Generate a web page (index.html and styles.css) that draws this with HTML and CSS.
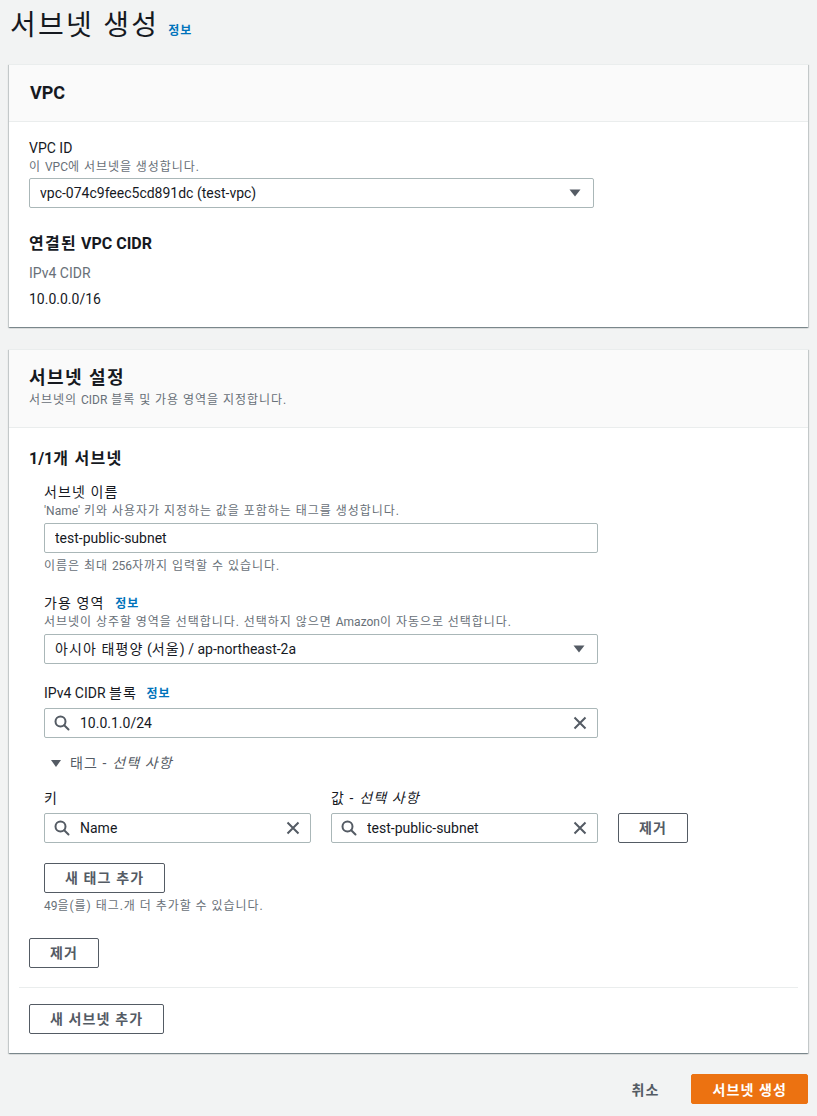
FILE: index.html
```html
<!DOCTYPE html>
<html lang="ko">
<head>
<meta charset="utf-8">
<title>서브넷 생성</title>
<link rel="stylesheet" href="styles.css">
</head>
<body>
<div class="page">
  <div class="page-head">
    <h1 class="page-title ko">서브넷 생성</h1>
    <a class="info ko" href="#">정보</a>
  </div>

  <section class="card card-vpc">
    <div class="card-head">
      <h2 class="card-title">VPC</h2>
    </div>
    <div class="card-body card-body-vpc">
      <div class="label">VPC ID</div>
      <div class="desc ko">이 <span class="en">VPC</span>에 서브넷을 생성합니다.</div>
      <div class="select select-vpc">
        <span>vpc-074c9feec5cd891dc (test-vpc)</span>
        <svg class="caret" width="12" height="8" viewBox="0 0 12 8"><path d="M0.5 0.5h11L6 7.5z" fill="#545b64"/></svg>
      </div>
      <h3 class="sub-title ko">연결된<span class="en"> VPC CIDR</span></h3>
      <div class="kv-key">IPv4 CIDR</div>
      <div class="kv-val">10.0.0.0/16</div>
    </div>
  </section>

  <section class="card">
    <div class="card-head card-head-desc">
      <h2 class="card-title ko">서브넷 설정</h2>
      <div class="desc head-desc ko">서브넷의 <span class="en">CIDR</span> 블록 및 가용 영역을 지정합니다.</div>
    </div>
    <div class="card-body card-body-subnet">
      <h3 class="sub-title first ko"><span class="en">1/1</span>개 서브넷</h3>
      <div class="group">
        <div class="field">
          <div class="label ko">서브넷 이름</div>
          <div class="desc ko"><span class="en">'Name'</span> 키와 사용자가 지정하는 값을 포함하는 태그를 생성합니다.</div>
          <div class="input"><span class="grow">test-public-subnet</span></div>
          <div class="hint ko">이름은 최대 <span class="en">256</span>자까지 입력할 수 있습니다.</div>
        </div>
        <div class="field">
          <div class="label ko">가용 영역 <a class="info" href="#">정보</a></div>
          <div class="desc ko">서브넷이 상주할 영역을 선택합니다. 선택하지 않으면 <span class="en">Amazon</span>이 자동으로 선택합니다.</div>
          <div class="select">
            <span><span class="ko">아시아 태평양</span> (<span class="ko">서울</span>) / ap-northeast-2a</span>
            <svg class="caret" width="12" height="8" viewBox="0 0 12 8"><path d="M0.5 0.5h11L6 7.5z" fill="#545b64"/></svg>
          </div>
        </div>
        <div class="field">
          <div class="label label-gap">IPv4 CIDR <span class="ko">블록</span> <a class="info ko" href="#">정보</a></div>
          <div class="input search">
            <svg class="ico-search" width="16" height="16" viewBox="0 0 16 16"><circle cx="6.5" cy="6.5" r="5" fill="none" stroke="#545b64" stroke-width="2"/><path d="M10.2 10.2L14.5 14.5" stroke="#545b64" stroke-width="2" stroke-linecap="round"/></svg>
            <span class="grow">10.0.1.0/24</span>
            <svg class="ico-x" width="14" height="14" viewBox="0 0 14 14"><path d="M1.5 1.5l11 11M12.5 1.5l-11 11" stroke="#545b64" stroke-width="2"/></svg>
          </div>
        </div>
        <div class="expander">
          <svg class="tri" width="10" height="7" viewBox="0 0 10 7"><path d="M0 0h10L5 7z" fill="#545b64"/></svg>
          <span class="ko">태그 - <i>선택 사항</i></span>
        </div>
        <div class="tags">
          <div class="label tag-label ko">키</div>
          <div class="label tag-label ko">값 - <i>선택 사항</i></div>
          <div></div>
          <div class="input search">
            <svg class="ico-search" width="16" height="16" viewBox="0 0 16 16"><circle cx="6.5" cy="6.5" r="5" fill="none" stroke="#545b64" stroke-width="2"/><path d="M10.2 10.2L14.5 14.5" stroke="#545b64" stroke-width="2" stroke-linecap="round"/></svg>
            <span class="grow">Name</span>
            <svg class="ico-x" width="14" height="14" viewBox="0 0 14 14"><path d="M1.5 1.5l11 11M12.5 1.5l-11 11" stroke="#545b64" stroke-width="2"/></svg>
          </div>
          <div class="input search">
            <svg class="ico-search" width="16" height="16" viewBox="0 0 16 16"><circle cx="6.5" cy="6.5" r="5" fill="none" stroke="#545b64" stroke-width="2"/><path d="M10.2 10.2L14.5 14.5" stroke="#545b64" stroke-width="2" stroke-linecap="round"/></svg>
            <span class="grow">test-public-subnet</span>
            <svg class="ico-x" width="14" height="14" viewBox="0 0 14 14"><path d="M1.5 1.5l11 11M12.5 1.5l-11 11" stroke="#545b64" stroke-width="2"/></svg>
          </div>
          <button class="btn ko">제거</button>
        </div>
        <button class="btn btn-addtag ko">새 태그 추가</button>
        <div class="hint ko"><span class="en">49</span>을(를) 태그.개 더 추가할 수 있습니다.</div>
      </div>
      <button class="btn btn-remove ko">제거</button>
      <hr class="divider">
      <button class="btn ko">새 서브넷 추가</button>
    </div>
  </section>

  <div class="footer">
    <button class="btn-link ko">취소</button>
    <button class="btn-primary ko">서브넷 생성</button>
  </div>
</div>
</body>
</html>
```

FILE: styles.css
```css
* { box-sizing: border-box; }

html, body {
  margin: 0;
  padding: 0;
  background: #f2f3f3;
}

body {
  font-family: Roboto, "Noto Sans CJK KR", sans-serif;
  font-size: 14px;
  line-height: 20px;
  color: #16191f;
}

/* Hangul runs are set a little wider, as in the reference */
.ko { letter-spacing: 0.08em; }
.en { letter-spacing: 0; }

.page {
  padding: 8px 9px 0 9px;
}

.page-head {
  display: flex;
  align-items: baseline;
  gap: 9px;
  margin-bottom: 20px;
  padding-left: 1px;
}

.page-title {
  margin: 0;
  font-size: 28px;
  line-height: 36px;
  font-weight: 400;
  color: #16191f;
}

.info {
  font-size: 12px;
  line-height: 16px;
  font-weight: 700;
  color: #0073bb;
  text-decoration: none;
}

.label .info {
  margin-left: 6px;
}

.card {
  background: #fff;
  border-top: 1px solid #eaeded;
  box-shadow: 0 1px 1px 0 rgba(0, 28, 36, 0.3), 1px 1px 1px 0 rgba(0, 28, 36, 0.15), -1px 1px 1px 0 rgba(0, 28, 36, 0.15);
  margin-bottom: 21px;
}

.card-vpc {
  margin-bottom: 22px;
}

.card-head {
  background: #fafafa;
  border-bottom: 1px solid #eaeded;
  padding: 17px 20px 17px 21px;
}

.card-head-desc {
  padding: 17px 20px 19px 20px;
}

.card-title {
  margin: 0;
  font-size: 18px;
  line-height: 22px;
  font-weight: 700;
}

.card-body {
  padding: 16px 20px 17px 20px;
}

.card-body-subnet {
  padding: 20px 10px 19px 10px;
}

.card-body-subnet > .sub-title,
.card-body-subnet > .btn,
.card-body-subnet > .group {
  margin-left: 10px;
}

.label {
  font-size: 14px;
  line-height: 20px;
}

.desc {
  font-size: 12px;
  line-height: 16px;
  color: #687078;
  margin-top: 1px;
}

.head-desc.desc {
  margin-top: 3px;
}

.hint {
  font-size: 12px;
  line-height: 16px;
  color: #687078;
  margin-top: 5px;
}

.select,
.input {
  display: flex;
  align-items: center;
  height: 30px;
  border: 1px solid #aab7b8;
  border-radius: 2px;
  background: #fff;
  padding: 0 12px 0 10px;
  font-size: 14px;
  margin-top: 4px;
}

.select > span,
.input .grow {
  flex: 1;
  white-space: nowrap;
  overflow: hidden;
}

.select-vpc {
  width: 565px;
  margin-top: 3px;
}

.caret {
  flex: none;
}

.sub-title {
  margin: 25px 0 0 0;
  font-size: 16px;
  line-height: 22px;
  font-weight: 700;
}

.sub-title.first {
  margin-top: 0;
}

.kv-key {
  margin-top: 7px;
  line-height: 22px;
  color: #687078;
}

.kv-val {
  margin-top: 4px;
  line-height: 22px;
}

.group {
  width: 554px;
  padding-left: 15px;
  box-sizing: content-box;
  margin-top: 12px;
}

.field + .field {
  margin-top: 19px;
}

.label-gap + .input {
  margin-top: 5px;
}

.input.search {
  padding: 0 10px 0 9px;
}

.ico-search {
  flex: none;
  margin-right: 10px;
}

.ico-x {
  flex: none;
}

.expander {
  display: flex;
  align-items: center;
  gap: 9px;
  margin-top: 15px;
  padding-left: 7px;
  color: #545b64;
  line-height: 20px;
}

.expander i,
.tag-label i {
  font-style: italic;
}

.tags {
  display: grid;
  grid-template-columns: 267px 267px 70px;
  column-gap: 20px;
  margin-top: 15px;
  width: 644px;
}

.tags .input {
  margin-top: 5px;
}

.tags .btn {
  margin-top: 5px;
}

.btn {
  display: inline-block;
  height: 30px;
  padding: 0 20px;
  border: 1px solid #545b64;
  border-radius: 2px;
  background: #fff;
  color: #545b64;
  font-family: inherit;
  font-size: 14px;
  font-weight: 700;
  line-height: 28px;
  white-space: nowrap;
  cursor: pointer;
}

.btn-addtag {
  margin-top: 20px;
  display: block;
}

.btn-remove {
  display: block;
  margin-top: 24px;
}

.divider {
  border: 0;
  border-top: 1px solid #eaeded;
  margin: 19px 0 16px 0;
}

.footer {
  display: flex;
  justify-content: flex-end;
  align-items: center;
  gap: 12px;
}

.btn-link {
  height: 30px;
  padding: 0 20px;
  border: 0;
  background: transparent;
  color: #545b64;
  font-family: inherit;
  font-size: 14px;
  font-weight: 700;
}

.btn-primary {
  height: 30px;
  padding: 0 20px;
  border: 1px solid #ec7211;
  border-radius: 2px;
  background: #ec7211;
  color: #fff;
  font-family: inherit;
  font-size: 14px;
  font-weight: 700;
}
```
